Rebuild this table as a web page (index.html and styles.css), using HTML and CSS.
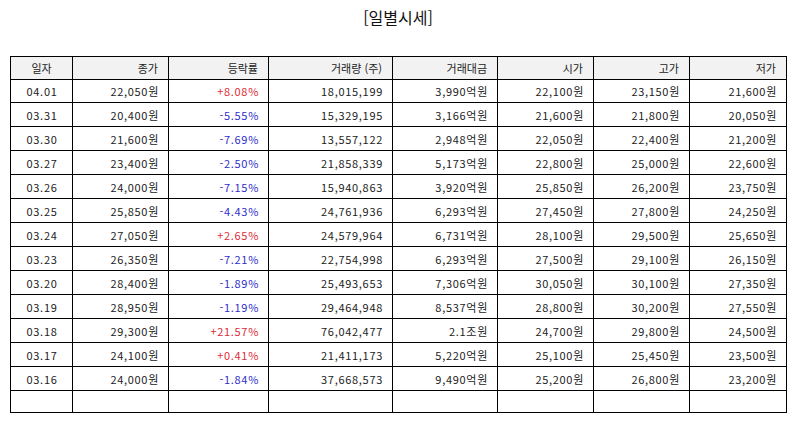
FILE: index.html
```html
<!DOCTYPE html>
<html lang="ko">
<head>
<meta charset="utf-8">
<link rel="stylesheet" href="styles.css">
</head>
<body>
<div class="page">
  <h1 class="title">[일별시세]</h1>
  <table class="quotes">
    <colgroup>
      <col class="c-date"><col class="c-close"><col class="c-rate"><col class="c-vol"><col class="c-amt"><col class="c-open"><col class="c-high"><col class="c-low">
    </colgroup>
    <thead>
      <tr><th class="center">일자</th><th>종가</th><th>등락률</th><th>거래량 (주)</th><th>거래대금</th><th>시가</th><th>고가</th><th>저가</th></tr>
    </thead>
    <tbody>
      <tr class="first"><td class="center">04.01</td><td>22,050원</td><td class="up">+8.08%</td><td>18,015,199</td><td>3,990억원</td><td>22,100원</td><td>23,150원</td><td>21,600원</td></tr>
      <tr><td class="center">03.31</td><td>20,400원</td><td class="down">-5.55%</td><td>15,329,195</td><td>3,166억원</td><td>21,600원</td><td>21,800원</td><td>20,050원</td></tr>
      <tr><td class="center">03.30</td><td>21,600원</td><td class="down">-7.69%</td><td>13,557,122</td><td>2,948억원</td><td>22,050원</td><td>22,400원</td><td>21,200원</td></tr>
      <tr><td class="center">03.27</td><td>23,400원</td><td class="down">-2.50%</td><td>21,858,339</td><td>5,173억원</td><td>22,800원</td><td>25,000원</td><td>22,600원</td></tr>
      <tr><td class="center">03.26</td><td>24,000원</td><td class="down">-7.15%</td><td>15,940,863</td><td>3,920억원</td><td>25,850원</td><td>26,200원</td><td>23,750원</td></tr>
      <tr><td class="center">03.25</td><td>25,850원</td><td class="down">-4.43%</td><td>24,761,936</td><td>6,293억원</td><td>27,450원</td><td>27,800원</td><td>24,250원</td></tr>
      <tr><td class="center">03.24</td><td>27,050원</td><td class="up">+2.65%</td><td>24,579,964</td><td>6,731억원</td><td>28,100원</td><td>29,500원</td><td>25,650원</td></tr>
      <tr><td class="center">03.23</td><td>26,350원</td><td class="down">-7.21%</td><td>22,754,998</td><td>6,293억원</td><td>27,500원</td><td>29,100원</td><td>26,150원</td></tr>
      <tr><td class="center">03.20</td><td>28,400원</td><td class="down">-1.89%</td><td>25,493,653</td><td>7,306억원</td><td>30,050원</td><td>30,100원</td><td>27,350원</td></tr>
      <tr><td class="center">03.19</td><td>28,950원</td><td class="down">-1.19%</td><td>29,464,948</td><td>8,537억원</td><td>28,800원</td><td>30,200원</td><td>27,550원</td></tr>
      <tr><td class="center">03.18</td><td>29,300원</td><td class="up">+21.57%</td><td>76,042,477</td><td>2.1조원</td><td>24,700원</td><td>29,800원</td><td>24,500원</td></tr>
      <tr><td class="center">03.17</td><td>24,100원</td><td class="up">+0.41%</td><td>21,411,173</td><td>5,220억원</td><td>25,100원</td><td>25,450원</td><td>23,500원</td></tr>
      <tr><td class="center">03.16</td><td>24,000원</td><td class="down">-1.84%</td><td>37,668,573</td><td>9,490억원</td><td>25,200원</td><td>26,800원</td><td>23,200원</td></tr>
      <tr class="blank"><td></td><td></td><td></td><td></td><td></td><td></td><td></td><td></td></tr>
    </tbody>
  </table>
</div>
</body>
</html>
```

FILE: styles.css
```css
html, body {
  margin: 0;
  padding: 0;
  background: #fff;
}
body {
  font-family: "Noto Sans CJK KR", "Noto Sans", sans-serif;
  color: #222;
}
.page {
  padding: 0 0 0 10px;
}
.title {
  margin: 0;
  width: 776px;
  height: 56px;
  padding-top: 5px;
  box-sizing: border-box;
  text-align: center;
  font-size: 16px;
  font-weight: 400;
  line-height: 24px;
  color: #111;
}
.quotes {
  width: 776px;
  border-collapse: collapse;
  table-layout: fixed;
  font-size: 11px;
}
.c-date { width: 62px; }
.c-close { width: 96px; }
.c-rate { width: 100px; }
.c-vol { width: 124px; }
.c-amt { width: 105px; }
.c-open { width: 96px; }
.c-high { width: 96px; }
.c-low { width: 97px; }
.quotes th,
.quotes td {
  border: 1px solid #000;
  height: 24px;
  padding: 0 10px;
  box-sizing: border-box;
  text-align: right;
  font-weight: 400;
  line-height: 14px;
  white-space: nowrap;
}
.quotes th,
.quotes tr.first td {
  height: 23px;
}
.quotes tr.blank td {
  height: 22px;
}
.quotes td {
  letter-spacing: 0.7px;
  padding-right: 9px;
}
.quotes th {
  background: #f2f2f2;
}
.quotes .center {
  text-align: center;
}
.up { color: #e02a36; }
.down { color: #2e2ecc; }
```
